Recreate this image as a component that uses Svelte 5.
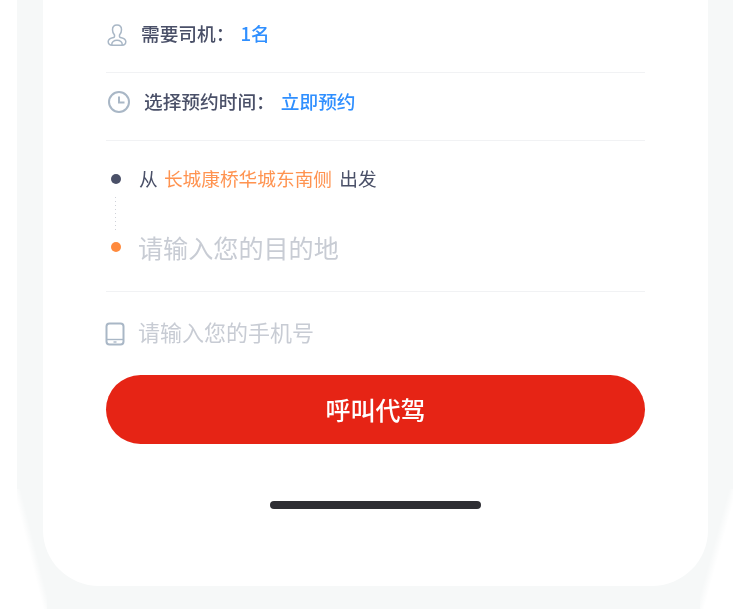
<script lang="ts">
  let driverCount = 1;
  let from = "长城康桥华城东南侧";
</script>

<div class="page">
  <div class="shell">
    <div class="card">
      <div class="row driver">
        <svg class="ico" width="20" height="22" viewBox="0 0 20 22" fill="none" stroke="#a9b7c6" stroke-width="1.5">
          <path d="M10 .9c2.700 0 4.500 2 4.500 4.800 0 2.300-.9 4.200-2 5.300v1.600c0 .5.300.8.800 1 2.600.6 5.500 1.300 5.500 3.900 0 2.200-1.600 3.700-3.800 3.700H5.200C3 21.200 1.200 19.700 1.200 17.500c0-2.600 2.900-3.300 5.500-3.900.5-.2.800-.5.800-1V11c-1.100-1.100-2-3-2-5.300C5.500 2.900 7.300.9 10 .9z" />
          <path d="M4.800 21c-.4-2.900 2.200-4.800 5.200-4.800s5.600 1.900 5.200 4.800" />
        </svg>
        <span class="label">需要司机：</span>
        <span class="value">{driverCount}名</span>
      </div>
      <div class="row time">
        <svg class="ico" width="24" height="24" viewBox="0 0 24 24" fill="none" stroke="#a9b7c6" stroke-width="2">
          <circle cx="12" cy="12" r="10" />
          <path d="M12 6.500v6h5.500" />
        </svg>
        <span class="label">选择预约时间：</span>
        <span class="value">立即预约</span>
      </div>
      <div class="route">
        <div class="stop start">
          <i class="dot dark"></i>
          <span class="from">从 <em>{from}</em> 出发</span>
        </div>
        <i class="dots"></i>
        <div class="stop end">
          <i class="dot orange"></i>
          <span class="dest">请输入您的目的地</span>
        </div>
      </div>
      <div class="row phone">
        <svg class="ico" width="20" height="24" viewBox="0 0 20 24" fill="none" stroke="#a9b7c6" stroke-width="2">
          <rect x="1.500" y="1.500" width="17" height="21" rx="3" />
          <path d="M2 17.500h16" stroke-width="1.400" />
          <path d="M8.500 20h3" stroke-width="1.400" />
        </svg>
        <span class="tel">请输入您的手机号</span>
      </div>
      <button class="call">呼叫代驾</button>
      <div class="home"></div>
    </div>
  </div>
</div>

<style>
  :global(body) {
    margin: 0;
    background: #fff;
  }
  .page {
    height: 609px;
    overflow: hidden;
    padding: 0 17px;
    font-family: "Noto Sans CJK SC", "Inter", sans-serif;
    box-sizing: border-box;
  }
  .shell {
    height: 609px;
    /* the backdrop fades out towards the bottom corners */
    background:
      linear-gradient(to top right, #fff 44%, transparent 56%) left bottom / 30px 120px no-repeat,
      linear-gradient(to top left, #fff 44%, transparent 56%) right bottom / 33px 120px no-repeat,
      #f6f8f8;
    padding: 0 25px 0 26px;
    box-sizing: border-box;
  }
  .card {
    height: 586px;
    background: #fff;
    border-radius: 0 0 56px 56px;
    padding: 0 63px;
    box-sizing: border-box;
    display: flex;
    flex-direction: column;
    filter: blur(0.4px);
  }
  .row {
    display: flex;
    align-items: center;
    box-sizing: border-box;
    line-height: 1.2;
  }
  .driver,
  .time {
    border-bottom: 1px solid #f1f2f4;
    font-size: 18.7px;
  }
  .driver {
    height: 73px;
    padding-bottom: 6px;
  }
  .time {
    height: 68px;
    padding-bottom: 11px;
  }
  .label {
    color: #4a5068;
    font-weight: 500;
  }
  .value {
    color: #2f8fff;
    font-weight: 500;
  }
  .driver .ico {
    margin: 3px 14px 0 1px;
  }
  .driver .value {
    margin-left: 6px;
  }
  .time .ico {
    margin: 2px 13px 0 1px;
  }
  .time .value {
    margin-left: 6px;
  }
  .route {
    height: 151px;
    border-bottom: 1px solid #f1f2f4;
    box-sizing: border-box;
    display: flex;
    flex-direction: column;
    padding-top: 24px;
  }
  .stop {
    display: flex;
    align-items: center;
  }
  .dot {
    width: 10px;
    height: 10px;
    border-radius: 50%;
    margin: 0 18px 0 5px;
  }
  .start .dot {
    margin-top: 2px;
  }
  .dark {
    background: #4a5068;
  }
  .orange {
    background: #ff8a3d;
  }
  .from {
    font-size: 18.7px;
    color: #4a5068;
    line-height: 26px;
  }
  .from em {
    font-style: normal;
    color: #ff9350;
    margin: 0 3px 0 2px;
  }
  .dots {
    width: 1px;
    height: 35px;
    margin: 6px 0 0 9px;
    background: repeating-linear-gradient(to bottom, #cfd2d9 0 1px, transparent 1px 4px);
  }
  .dest {
    font-size: 25.1px;
    line-height: 30px;
    color: #c8ccd4;
    margin-left: -1px;
  }
  .phone {
    height: 83px;
    padding-bottom: 4px;
  }
  .phone .ico {
    margin: 4px 13px 0 -1px;
  }
  .tel {
    font-size: 22px;
    color: #c8ccd4;
  }
  .call {
    height: 69px;
    border: 0;
    border-radius: 35px;
    background: #e62415;
    color: #fff;
    font-family: inherit;
    font-size: 25px;
    font-weight: 500;
    flex: none;
    padding: 0 0 2px;
  }
  .home {
    width: 211px;
    height: 8px;
    border-radius: 4px;
    background: #2e2e33;
    margin: 57px auto 0;
  }
</style>
